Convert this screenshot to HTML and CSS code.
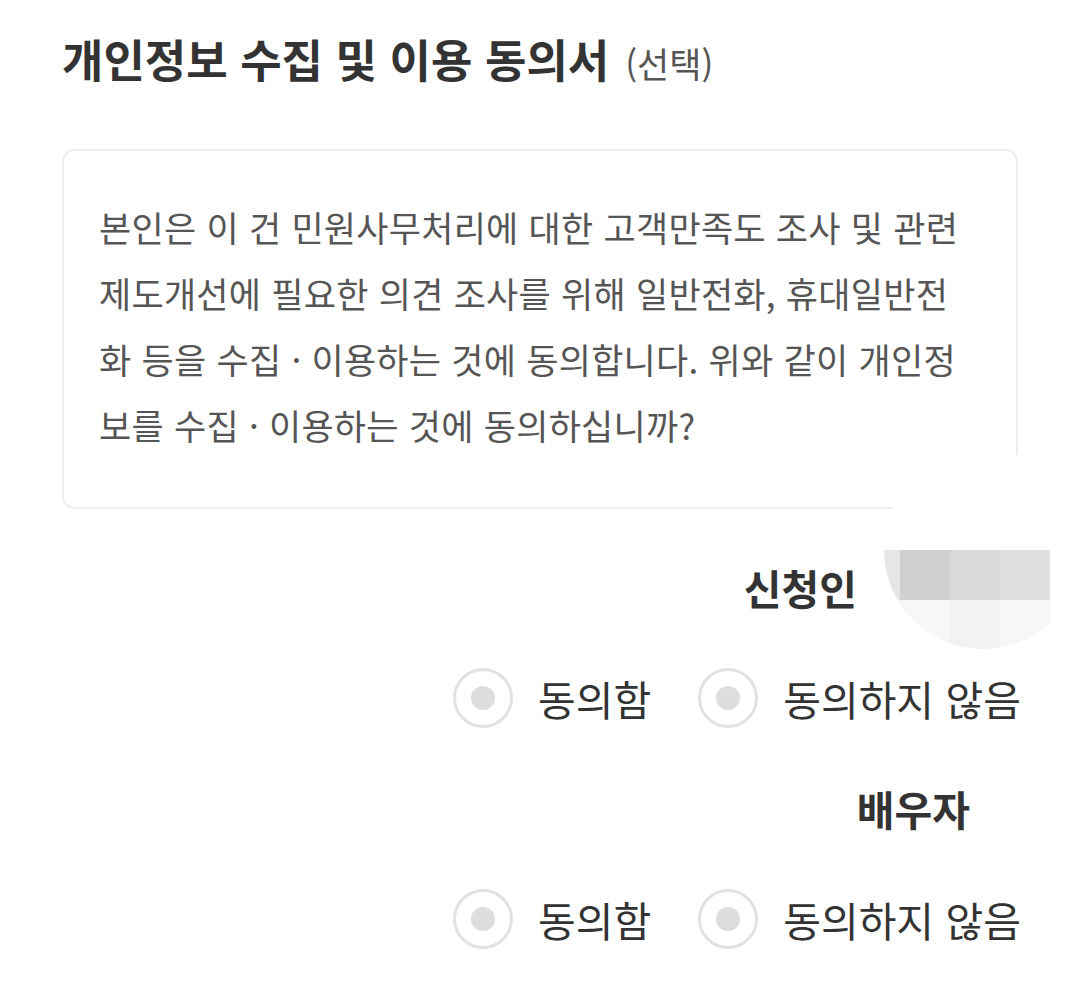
FILE: index.html
```html
<!DOCTYPE html>
<html lang="ko">
<head>
  <meta charset="UTF-8" />
  <meta name="viewport" content="width=device-width, initial-scale=1.0"/>
  <title>개인정보 수집 및 이용 동의서</title>
  <link rel="stylesheet" href="styles.css">
</head>
<body>
  <div class="page">

    <!-- Title -->
    <h2 class="title">개인정보 수집 및 이용 동의서<span class="optional">(선택)</span></h2>

    <!-- Agreement text -->
    <div class="notice">
      본인은 이 건 민원사무처리에 대한 고객만족도 조사 및 관련 제도개선에 필요한 의견 조사를 위해 일반전화, 휴대일반전화 등을 수집 · 이용하는 것에 동의합니다. 위와 같이 개인정보를 수집 · 이용하는 것에 동의하십니까?
    </div>

    <!-- Applicant -->
    <div class="person">
      <span class="person-label">신청인</span>
      <span class="person-name applicant"></span>
    </div>
    <div class="choices">
      <label class="choice"><span class="radio"></span>동의함</label>
      <label class="choice"><span class="radio"></span>동의하지 않음</label>
    </div>

    <!-- Spouse -->
    <div class="person">
      <span class="person-label">배우자</span>
      <span class="person-name spouse"></span>
    </div>
    <div class="choices">
      <label class="choice"><span class="radio"></span>동의함</label>
      <label class="choice"><span class="radio"></span>동의하지 않음</label>
    </div>

    <!-- Blurred profile (privacy mask) -->
    <div class="mask-cover"></div>
    <div class="mask">
      <div class="px"></div><div class="px"></div><div class="px"></div><div class="px"></div><div class="px"></div>
      <div class="px c1"></div><div class="px c2"></div><div class="px c3"></div><div class="px c4"></div><div class="px"></div>
      <div class="px c5"></div><div class="px c5"></div><div class="px c6"></div><div class="px c5"></div><div class="px"></div>
    </div>

  </div>
</body>
</html>
```

FILE: styles.css
```css
body {
  margin: 0;
  background: #fff;
  font-family: "Noto Sans CJK KR", "Noto Sans", sans-serif;
  color: #333;
}
.page {
  position: relative;
  padding: 29px 62px 40px 62px;
}
.title {
  display: flex;
  align-items: baseline;
  height: 60px;
  margin: 0;
  font-size: 45px;
  font-weight: 700;
  line-height: 60px;
  color: #333;
}
.optional {
  margin-left: 16px;
  font-size: 35px;
  font-weight: 400;
  line-height: 1;
  color: #555;
}
.notice {
  margin-top: 60px;
  border: 2px solid #eeeeee;
  border-radius: 12px;
  padding: 43px 51px 49px 35px;
  font-size: 35px;
  line-height: 66px;
  letter-spacing: 0.25px;
  color: #555;
}
.person {
  display: flex;
  justify-content: flex-end;
  align-items: center;
  height: 60px;
  margin-top: 48px;
}
.person + .choices {
  margin-top: 51px;
}
.choices + .person {
  margin-top: 50px;
}
.person-label {
  font-size: 41px;
  font-weight: 700;
  color: #333;
}
.person-name.applicant {
  width: 161px;
}
.person-name.spouse {
  width: 48px;
}
.choices {
  display: flex;
  justify-content: flex-end;
  align-items: center;
  gap: 47px;
  height: 60px;
  margin-right: -3px;
}
.choice {
  display: flex;
  align-items: center;
  gap: 25px;
  font-size: 41px;
  color: #333;
}
.radio {
  width: 54px;
  height: 54px;
  border: 3px solid #e2e2e2;
  border-radius: 50%;
  display: flex;
  align-items: center;
  justify-content: center;
}
.radio::after {
  content: "";
  width: 24px;
  height: 24px;
  border-radius: 50%;
  background: #dddddd;
}
.mask-cover {
  position: absolute;
  left: 893px;
  top: 455px;
  width: 187px;
  height: 96px;
  background: #fff;
}
.mask {
  position: absolute;
  left: 884px;
  top: 451px;
  width: 198px;
  height: 198px;
  border-radius: 50%;
  overflow: hidden;
  display: grid;
  grid-template-columns: 16px 50px 50px 50px 1fr;
  grid-template-rows: 99px 50px 50px;
}
.px { background: #fff; }
.px.c1 { background: #e6e6e6; }
.px.c2 { background: #d0d0d0; }
.px.c3 { background: #d9d9d9; }
.px.c4 { background: #e0e0e0; }
.px.c5 { background: #f7f7f7; }
.px.c6 { background: #f2f2f2; }
```
